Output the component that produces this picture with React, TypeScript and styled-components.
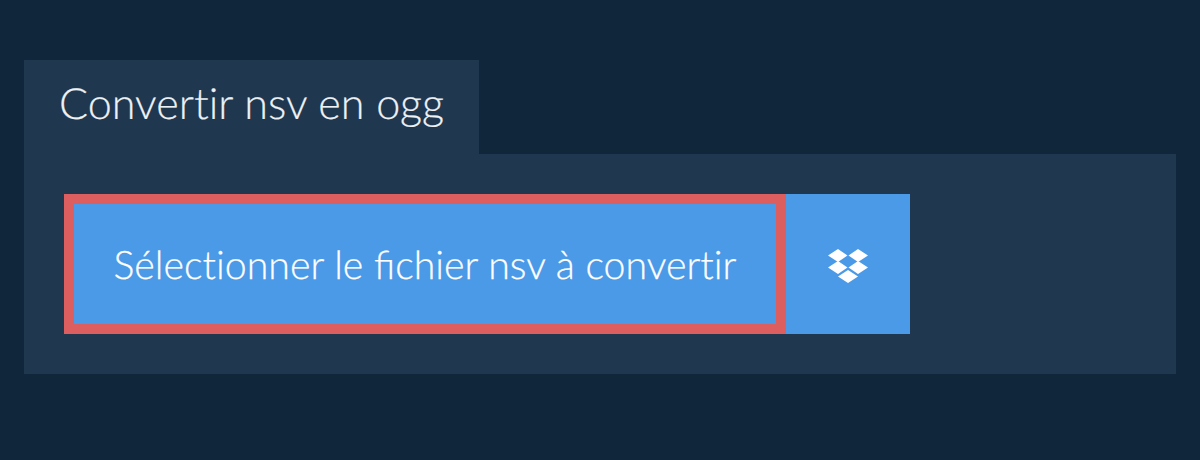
import React from 'react';
import styled, { createGlobalStyle } from 'styled-components';

const Global = createGlobalStyle`
  html, body { margin: 0; padding: 0; background: #10263b; }
  body { font-family: Lato, "Noto Sans", sans-serif; text-rendering: geometricPrecision; }
`;
const Page = styled.div`
  width: 1200px; height: 460px; box-sizing: border-box;
  padding: 60px 24px 0; background: #10263b;
  display: flex; flex-direction: column; overflow: hidden;
`;
const Tab = styled.h1`
  margin: 0; align-self: flex-start; width: 455px; height: 94px; box-sizing: border-box;
  padding: 0 0 8px 35px; display: flex; align-items: center;
  background: #203750; color: #edf1f4;
  font-size: 43.100px; font-weight: 300; white-space: nowrap;
  -webkit-text-stroke: 0.2px #edf1f4;
`;
const Panel = styled.div`
  background: #203750; height: 220px; box-sizing: border-box; padding: 40px; display: flex;
`;
const Select = styled.button`
  width: 722px; height: 140px; box-sizing: border-box; border: 10px solid #dd5e5e;
  background: #4b9ae8; color: #fff; font: 300 39.300px Lato, sans-serif; padding: 0; white-space: nowrap;
  text-rendering: geometricPrecision;
  -webkit-text-stroke: 0.25px #fff;
`;
const Drop = styled.button`
  width: 124px; height: 140px; border: 0; padding: 4px 0 0; background: #4b9ae8;
  display: flex; align-items: center; justify-content: center;
`;
const NoLig = styled.span`
  font-variant-ligatures: none;
`;
export default function App() {
  return (
    <Page>
      <Global />
      <Tab><span>Conver<NoLig>ti</NoLig>r nsv en ogg</span></Tab>
      <Panel>
        <Select>Sélec<NoLig>ti</NoLig>onner le fichier nsv à conver<NoLig>ti</NoLig>r</Select>
        <Drop>
          <svg width="40" height="34" viewBox="0 0 40 34" fill="#fff">
            <path d="M10 0 0 6.500 10 13l9.500-6.500zM30 0l-9.500 6.500L30 13l10-6.500zM10 12 0 18.500 10 25l9.500-6.500zM30 12l-9.500 6.500L30 25l10-6.500zM20 21l-10 6.500L20 34l10-6.500z" />
          </svg>
        </Drop>
      </Panel>
    </Page>
  );
}
